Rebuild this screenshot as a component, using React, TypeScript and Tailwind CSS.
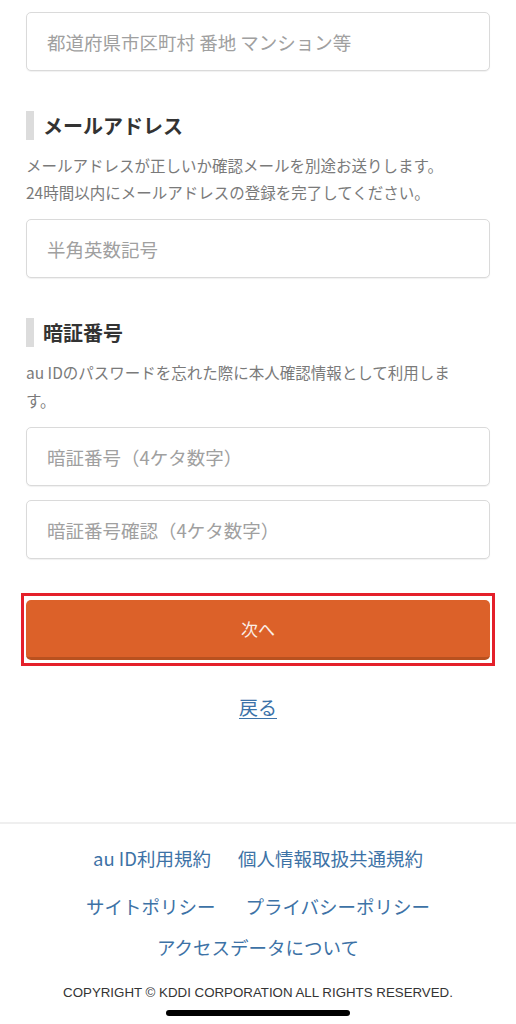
import React from 'react';

const jp = '"Noto Sans CJK JP", "Noto Sans", sans-serif';

function Field({ placeholder }: { placeholder: string }) {
  return (
    <input
      type="text"
      placeholder={placeholder}
      className="block w-full h-[59px] rounded-[5px] border border-[#dadada] bg-white px-5 text-[18.5px] text-[#333] placeholder:text-[#a0a0a0] shadow-[0_1px_1px_rgba(0,0,0,0.06)] outline-none"
    />
  );
}

function SectionHeading({ title }: { title: string }) {
  return (
    <div className="flex items-center h-[29px]">
      <div className="w-2 h-full bg-[#dcdcdc]" />
      <h2 className="ml-[9px] text-[20px] font-bold text-[#333] leading-none">{title}</h2>
    </div>
  );
}

export default function App() {
  return (
    <div className="w-[516px] h-[1024px] bg-white overflow-hidden" style={{ fontFamily: jp }}>
      <div className="px-[26px] pt-3">
        <Field placeholder="都道府県市区町村 番地 マンション等" />

        {/* Email */}
        <div className="mt-[40px]">
          <SectionHeading title="メールアドレス" />
          <p className="mt-3 text-[15.5px] leading-[27px] text-[#7a7a7a]">
            メールアドレスが正しいか確認メールを別途お送りします。
            <br />
            24時間以内にメールアドレスの登録を完了してください。
          </p>
          <div className="mt-[13px]">
            <Field placeholder="半角英数記号" />
          </div>
        </div>

        {/* PIN */}
        <div className="mt-10">
          <SectionHeading title="暗証番号" />
          <p className="mt-[11px] text-[15.5px] leading-[28px] text-[#7a7a7a]">
            au IDのパスワードを忘れた際に本人確認情報として利用しま
            <br />
            す。
          </p>
          <div className="mt-[13px] space-y-[14px]">
            <Field placeholder="暗証番号（4ケタ数字）" />
            <Field placeholder="暗証番号確認（4ケタ数字）" />
          </div>
        </div>

        {/* Next button */}
        <div className="mt-[34px] -mx-[5px] border-[3px] border-[#e4202a] pt-1 pb-[3px] px-[2px]">
          <button className="w-full h-[60px] rounded-[5px] bg-[#dc6129] border-b-[3px] border-[#b9511f] text-[17px] text-[#fbeee6]">
            次へ
          </button>
        </div>

        <div className="mt-[27px] text-center">
          <a href="#" className="text-[19px] text-[#3c72a8] underline underline-offset-[3px]">
            戻る
          </a>
        </div>
      </div>

      {/* Footer */}
      <footer className="mt-[100px] border-t-2 border-[#efefef] pt-[21px]">
        <div className="flex flex-col items-center text-[18.5px] text-[#3d72a6] leading-[26px]">
          <div className="flex gap-[27px]">
            <a href="#">au ID利用規約</a>
            <a href="#">個人情報取扱共通規約</a>
          </div>
          <div className="mt-[22px] flex gap-[30px]">
            <a href="#">サイトポリシー</a>
            <a href="#">プライバシーポリシー</a>
          </div>
          <div className="mt-[15px]">
            <a href="#">アクセスデータについて</a>
          </div>
        </div>
        <p
          className="mt-[23px] text-center text-[13.3px] text-[#333]"
          style={{ fontFamily: '"Liberation Sans", Arial, sans-serif' }}
        >
          COPYRIGHT © KDDI CORPORATION ALL RIGHTS RESERVED.
        </p>
        <div className="mx-auto mt-2 w-[184px] h-[6px] rounded-full bg-black" />
      </footer>
    </div>
  );
}
